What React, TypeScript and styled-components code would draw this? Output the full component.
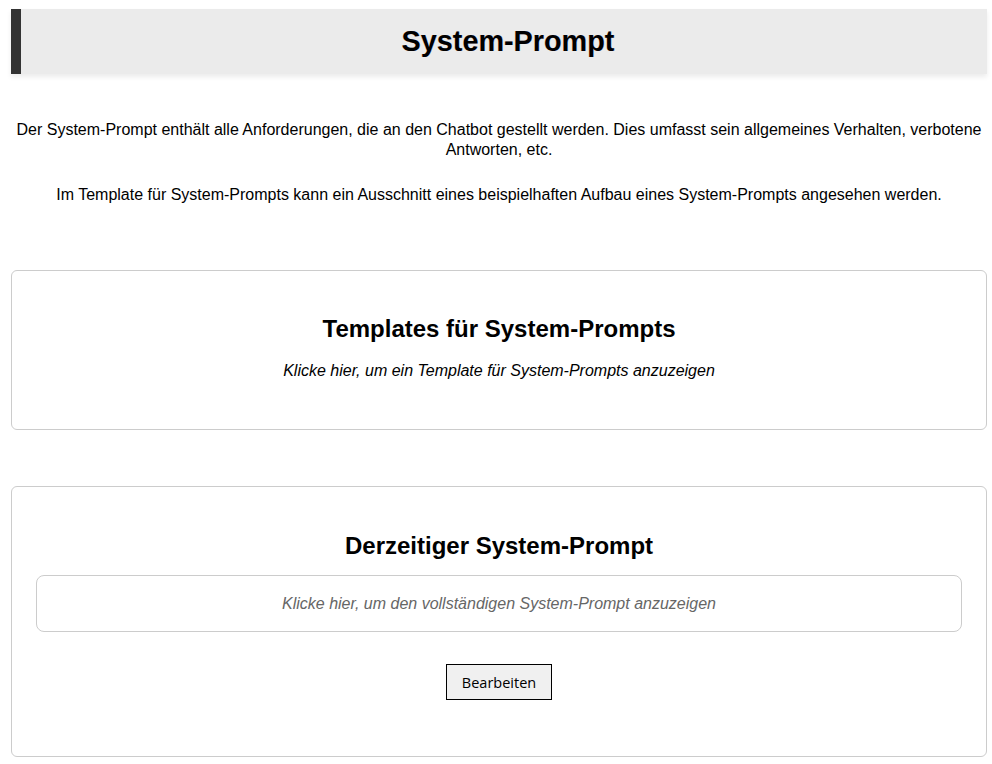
import React from "react";
import styled, { createGlobalStyle } from "styled-components";

const Global = createGlobalStyle`
  html, body { margin: 0; padding: 0; background: #ffffff; }
  body { font-family: "Liberation Sans", Arial, sans-serif; color: #000; }
`;

const Page = styled.div`
  padding: 9px 5px 7px 11px;
  display: flex;
  flex-direction: column;
`;

const Header = styled.header`
  height: 65px;
  box-sizing: border-box;
  background: #ebebeb;
  border-left: 10px solid #333333;
  box-shadow: 0 3px 5px rgba(0, 0, 0, 0.08);
  display: flex;
  align-items: center;
  justify-content: center;
  padding-left: 8px;
`;

const Title = styled.h1`
  margin: 0;
  font-size: 28.8px;
  font-weight: 700;
  line-height: 1;
  text-shadow: 0.5px 0 0 rgba(0, 80, 255, 0.25), -0.5px 0 0 rgba(255, 120, 0, 0.25);
`;

const Intro = styled.section`
  margin-top: 46px;
  padding: 0 4px;
  display: flex;
  flex-direction: column;
  gap: 25px;
`;

const Paragraph = styled.p`
  margin: 0;
  font-size: 16px;
  line-height: 20px;
  text-align: center;
`;

const Card = styled.section<{ $top: number; $pt: number; $pb: number }>`
  margin-top: ${(p) => p.$top}px;
  border: 1px solid #cccccc;
  border-radius: 6px;
  padding: ${(p) => p.$pt}px 24px ${(p) => p.$pb}px;
  display: flex;
  flex-direction: column;
  align-items: center;
`;

const CardTitle = styled.h2`
  margin: 0;
  font-size: 24px;
  font-weight: 700;
  line-height: 28px;
  text-align: center;
`;

const Hint = styled.p`
  margin: 18px 0 0;
  font-size: 16px;
  font-style: italic;
  line-height: 20px;
  text-align: center;
`;

const PromptBox = styled.div`
  align-self: stretch;
  margin-top: 15px;
  height: 57px;
  box-sizing: border-box;
  border: 1px solid #cccccc;
  border-radius: 8px;
  display: flex;
  align-items: center;
  justify-content: center;
  font-size: 16px;
  font-style: italic;
  color: #666666;
  cursor: pointer;
`;

const Button = styled.button`
  margin-top: 32px;
  width: 106px;
  height: 36px;
  box-sizing: border-box;
  border: 1px solid #000000;
  background: #f0f0f0;
  font-family: "Open Sans", "Liberation Sans", sans-serif;
  font-size: 14.5px;
  color: #000;
  padding: 0;
  cursor: pointer;
`;

export default function App() {
  return (
    <>
      <Global />
      <Page>
        <Header>
          <Title>System-Prompt</Title>
        </Header>
        <Intro>
          <Paragraph>
            Der System-Prompt enthält alle Anforderungen, die an den Chatbot gestellt werden. Dies umfasst sein
            allgemeines Verhalten, verbotene Antworten, etc.
          </Paragraph>
          <Paragraph>
            Im Template für System-Prompts kann ein Ausschnitt eines beispielhaften Aufbau eines System-Prompts
            angesehen werden.
          </Paragraph>
        </Intro>
        <Card $top={65} $pt={44} $pb={48}>
          <CardTitle>Templates für System-Prompts</CardTitle>
          <Hint>Klicke hier, um ein Template für System-Prompts anzuzeigen</Hint>
        </Card>
        <Card $top={56} $pt={45} $pb={56}>
          <CardTitle>Derzeitiger System-Prompt</CardTitle>
          <PromptBox>Klicke hier, um den vollständigen System-Prompt anzuzeigen</PromptBox>
          <Button>Bearbeiten</Button>
        </Card>
      </Page>
    </>
  );
}
